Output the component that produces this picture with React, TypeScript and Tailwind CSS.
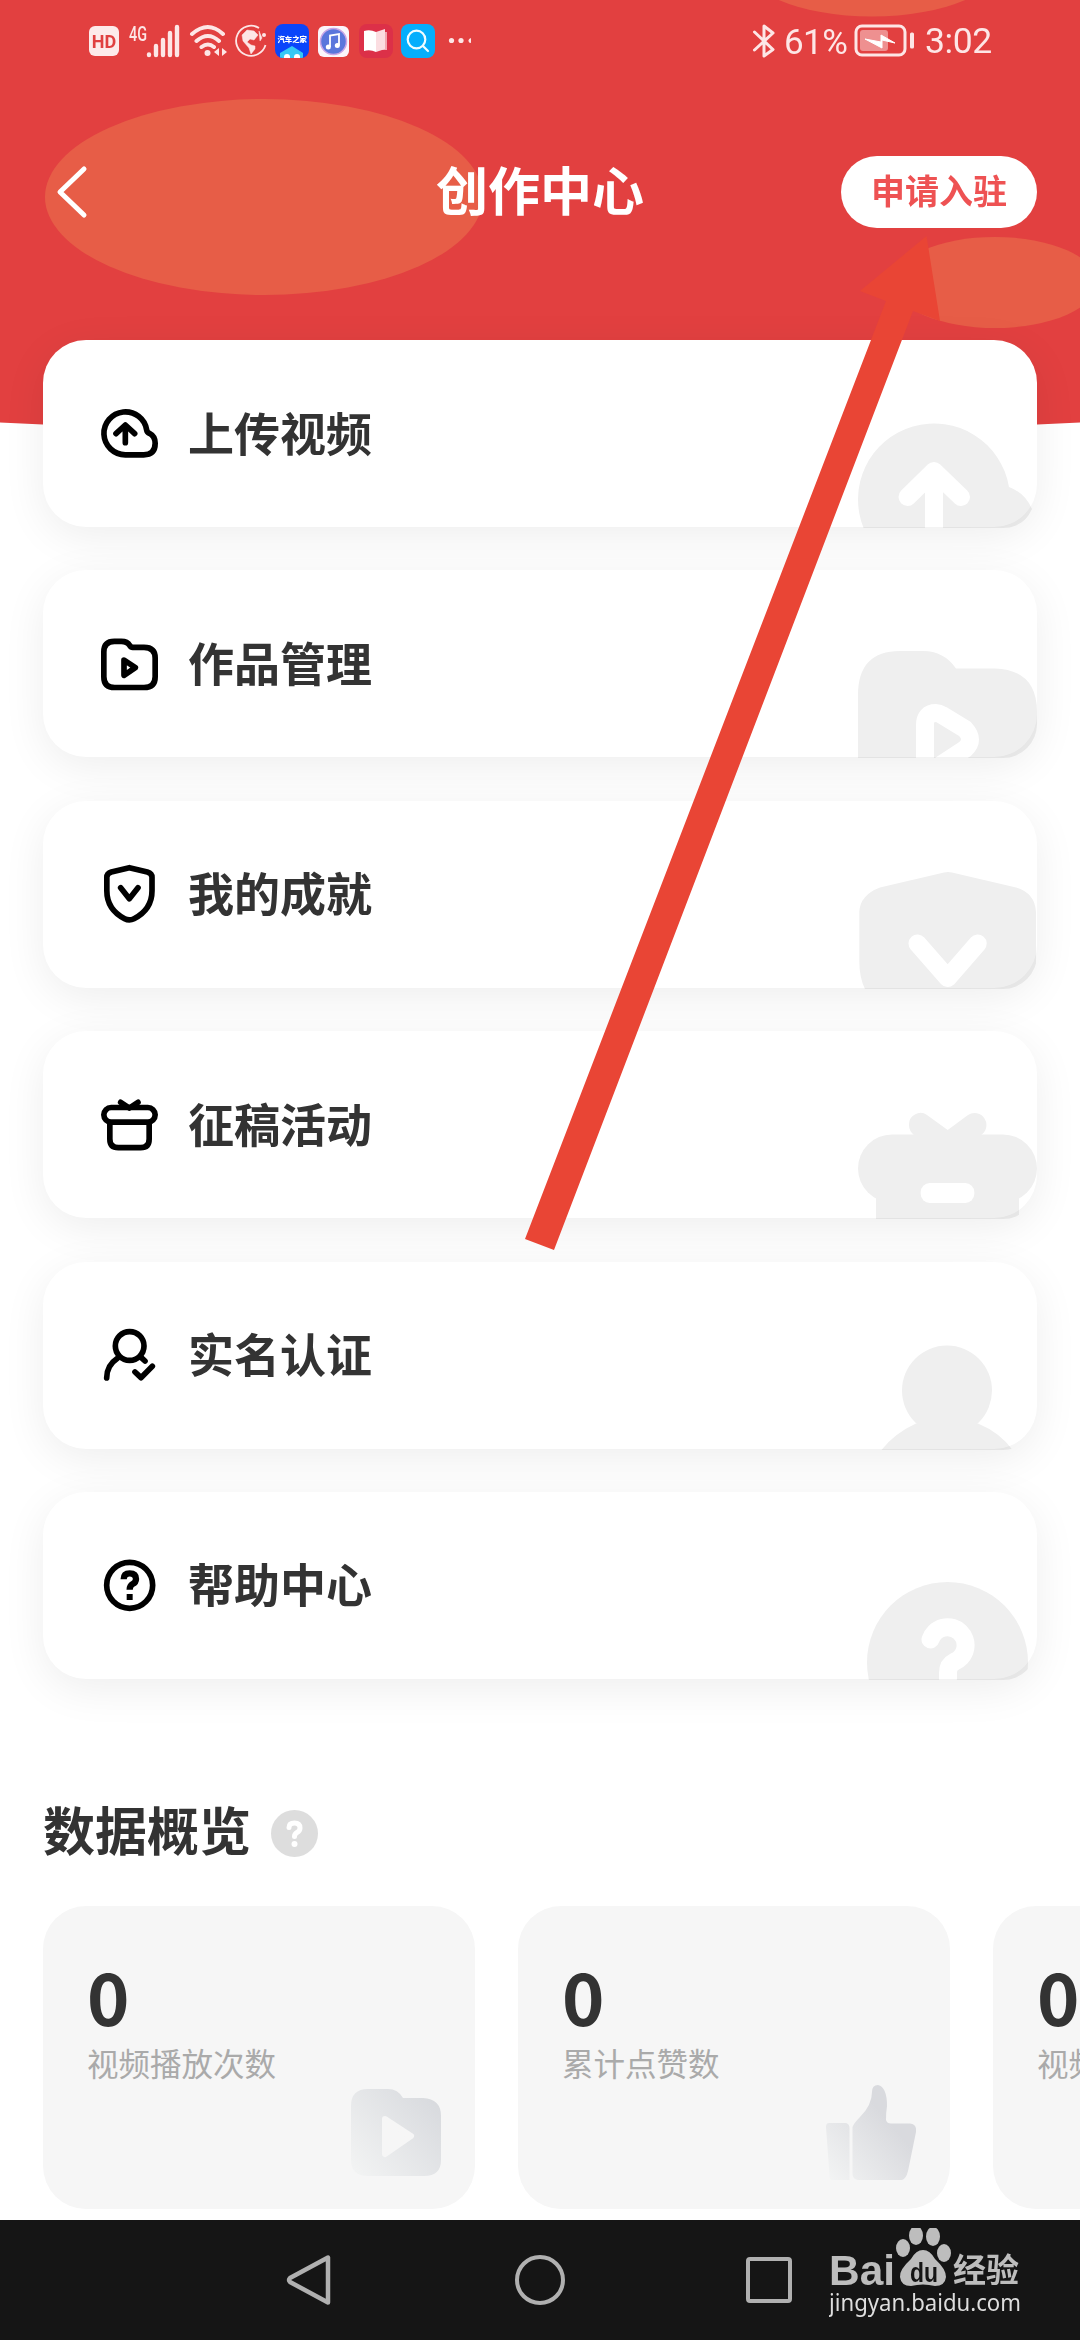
import React from 'react';

type MenuItem = {
  label: string;
  icon: React.ReactNode;
  watermark: React.ReactNode;
};

const menuItems: MenuItem[] = [
  {
    label: '上传视频',
    icon: (
      <>
        <path d="M82 158.5A64.5 64.5 0 1 1 146 84Q147 91 154 94Q171.500 103 171.500 124Q171.500 158.500 137 158.500Z" />
        <path d="M54 95L82 69L110 95M82 72V122" />
      </>
    ),
    watermark: (
      <>
        <path d="M7 189A76 76 0 1 1 152 147Q168 153 175 169Q166 188.500 146 189Z" />
        <path d="M50.500 157L77 131L104 157M77 133V200" stroke="#fff" strokeWidth="18" fill="none" />
      </>
    ),
  },
  {
    label: '作品管理',
    icon: (
      <>
        <path d="M17.500 60Q17.500 28 49 28H70Q88 28 95 40Q99 46 104 46H138Q171.500 46 171.500 78V134Q171.500 166.500 138 166.500H50Q17.500 166.500 17.500 134Z" />
        <path d="M78 84L112 107L78 130Z" />
      </>
    ),
    watermark: (
      <>
        <path d="M1 190V125Q1 81 43 81H66Q87 81 99 98.500H138Q180 100 180 142V190Z" />
        <path d="M68 204V155Q68 143 79 143Q82 143 85 145L108 159Q118 170 108 179L76 200" stroke="#fff" strokeWidth="18" fill="none" />
      </>
    ),
  },
  {
    label: '我的成就',
    icon: (
      <>
        <path d="M94 17L40 30Q26.500 34 26.500 46V86Q26.500 142 80 170Q94 177 108 170Q162 142 162 86V46Q162 34 148 30Z" />
        <path d="M68 77L94 110L120 77" />
      </>
    ),
    watermark: (
      <>
        <path d="M9 190Q2.300 178 2.300 160V111Q3 94 23 86.500L87 71.500Q91 70.500 95 71.500L159 86.500Q178 92 179 111V190Z" />
        <path d="M60.500 142.500L90.700 177L120.700 142.500" stroke="#fff" strokeWidth="18" fill="none" />
      </>
    ),
  },
  {
    label: '征稿活动',
    icon: (
      <>
        <rect x="17.500" y="43.500" width="154" height="44" rx="22" />
        <path d="M35.500 90V138Q35.500 164 61 164H128Q153.500 164 153.500 138V90" />
        <path d="M68 28L94 45L120 28" />
      </>
    ),
    watermark: (
      <>
        <rect x="1" y="103.500" width="179" height="68" rx="34" />
        <path d="M19 150H162V190H19Z" />
        <path d="M52 94A11.500 11.500 0 0 1 70 84L90.700 99L111 84A11.500 11.500 0 0 1 124 104V110H57V104Q52 100 52 94Z" />
        <rect x="63.700" y="152" width="53.600" height="20" rx="9" fill="#fff" />
      </>
    ),
  },
  {
    label: '实名认证',
    icon: (
      <>
        <circle cx="95" cy="69" r="43" />
        <path d="M26 165Q26 127 58 106M130 104L141 114M111 147L129 164L163 130" />
      </>
    ),
    watermark: (
      <>
        <circle cx="90" cy="128.500" r="45" />
        <path d="M23 190Q36 172 59 161.500H121Q144 171 157 190Z" />
      </>
    ),
  },
  {
    label: '帮助中心',
    icon: (
      <>
        <circle cx="95" cy="97" r="69" />
        <path d="M77 79Q77 61 95 61Q114 61 114 78Q114 88 104 93Q95 98 95 110" strokeLinecap="butt" strokeWidth="19" />
        <path d="M86 123H104V141H86Z" fill="#000" stroke="none" />
      </>
    ),
    watermark: (
      <>
        <circle cx="90.500" cy="170.500" r="80.500" />
        <path d="M73.500 147.500A18 18 0 1 1 97 170Q91 173 91 181V186" stroke="#fff" strokeWidth="18" fill="none" />
      </>
    ),
  },
];

const FolderArt = () => (
  <svg className="absolute right-[34px] bottom-[33px] w-[90px] h-[87px]" viewBox="0 0 90 87">
    <defs>
      <linearGradient id="folder" x1="0" y1="1" x2="1" y2="0.200">
        <stop offset="0.050" stopColor="#f2f3f3" />
        <stop offset="1" stopColor="#d8dade" />
      </linearGradient>
    </defs>
    <path d="M0 17Q0 0 17 0H37Q47 0 52 9H72Q90 10 90 27V71Q90 87 73 87H17Q0 87 0 71Z" fill="url(#folder)" />
    <path d="M34 30L60 47L34 65Z" fill="#f6f6f6" stroke="#f6f6f6" strokeWidth="6" strokeLinejoin="round" />
  </svg>
);

const ThumbArt = () => (
  <svg className="absolute right-[34px] bottom-[29px] w-[90px] h-[95px]" viewBox="0 0 90 95">
    <defs>
      <linearGradient id="thumb" gradientUnits="userSpaceOnUse" x1="2" y1="95" x2="66" y2="40">
        <stop offset="0" stopColor="#f3f4f4" />
        <stop offset="1" stopColor="#d9dade" />
      </linearGradient>
    </defs>
    <g fill="url(#thumb)">
      <path d="M3 38H20Q23.500 39 23.500 43V95H5Q3.500 94 3.500 90L0 42Q0 38 3 38Z" />
      <path d="M26.500 42Q28 38 34 32Q46 20 46 7Q46 0 52 0Q61 2 61 21Q60 27 60 35Q61 38.500 65 38.500H84Q91 39 90 47L82 86Q80 94 76 95H32Q26.500 94 26.500 89Z" />
    </g>
  </svg>
);

const stats = [
  { value: '0', label: '视频播放次数', art: <FolderArt /> },
  { value: '0', label: '累计点赞数', art: <ThumbArt /> },
  { value: '0', label: '视频评论数', art: null },
];

const StatusBar = () => (
  <div className="relative flex h-[82px] items-center pl-[89px] pr-[90px] text-[#fde6e6] font-[Roboto,sans-serif]">
    <div className="flex h-[30px] w-[30px] items-center justify-center rounded-[6px] bg-[#fdeaea] text-[18px] font-bold text-[#e04040]">HD</div>
    <svg className="ml-[10px] h-[34px] w-[53px] overflow-visible" viewBox="0 0 53 34">
      <text x="0" y="16.500" fontSize="20" fontWeight="500" fill="#fde6e6" textLength="18" lengthAdjust="spacingAndGlyphs">4G</text>
      <path d="M20 30.500V31M27 22V31M34 16V31M41 9V31M48 3V31" stroke="#fde6e6" strokeWidth="4.400" strokeLinecap="round" />
    </svg>
    <svg className="ml-[7px] h-[34px] w-[39px]" viewBox="0 0 39 34" fill="none" stroke="#fde6e6" strokeWidth="4" strokeLinecap="round">
      <path d="M3 10Q19 -4 34 10M7.500 17Q19 7 30 17M12.500 23Q19 18 25 23" />
      <circle cx="18.500" cy="29" r="3" fill="#fde6e6" stroke="none" />
      <path d="M30 24V32L25 28ZM33 24V32L38 28Z" fill="#fde6e6" stroke="none" />
    </svg>
    <svg className="ml-[6px] h-[34px] w-[34px]" viewBox="0 0 34 34" fill="none" stroke="#fde6e6" strokeWidth="1.800">
      <path d="M25 4A15 15 0 1 0 31.500 21" />
      <path d="M8 11L13 6L20 7L24 11L20 16L16 15L13 18L17 21L21 22V25L17 30L15 24L9 17Z M25 7L28 14L26 17Z" fill="#fde6e6" strokeWidth="0.500" />
      <circle cx="30" cy="11" r="2" fill="#fde6e6" stroke="none" />
    </svg>
    <svg className="ml-[7px] h-[34px] w-[34px] rounded-[8px]" viewBox="0 0 34 34">
      <rect width="34" height="34" fill="#0a45fa" />
      <text x="2.500" y="18" fontSize="7.400" fontWeight="900" fill="#fff" textLength="29.500" className="font-['Noto_Sans_CJK_SC',sans-serif]">汽车之家</text>
      <path d="M17 22L28 29V34H5V29Z" fill="#35c8f5" />
      <circle cx="12" cy="33" r="3" fill="#fff" />
      <circle cx="22" cy="33" r="3" fill="#fff" />
    </svg>
    <svg className="ml-[9px] h-[31px] w-[31px] rounded-[6px]" viewBox="0 0 31 31">
      <rect width="31" height="31" fill="#fbf5fb" />
      <circle cx="15.500" cy="15.500" r="13" fill="#5a76dc" stroke="#c9a6e6" strokeWidth="1.500" />
      <path d="M12 21V9.500L21 8V19.500" fill="none" stroke="#fff" strokeWidth="1.800" />
      <circle cx="10.300" cy="21" r="2.500" fill="#fff" />
      <circle cx="19.300" cy="19.500" r="2.500" fill="#fff" />
    </svg>
    <svg className="ml-[10px] h-[34px] w-[34px] rounded-[8px]" viewBox="0 0 34 34">
      <rect width="34" height="34" fill="#dc3048" />
      <path d="M17 8H28V26H17Z" fill="#f2a7b0" />
      <path d="M5 7Q11 5 17 8V28Q11 25 5 27Z" fill="#fff" />
      <path d="M17 8L26 5V25L17 28Z" fill="#fbdde1" />
    </svg>
    <svg className="ml-[8px] h-[34px] w-[34px] rounded-[8px]" viewBox="0 0 34 34" fill="none" stroke="#effcff" strokeWidth="2.200" strokeLinecap="round">
      <rect width="34" height="34" fill="#05aefc" stroke="none" />
      <circle cx="15.500" cy="15.500" r="8.800" />
      <path d="M22 22L27 27" />
    </svg>
    <svg className="ml-[12px] h-[8px] w-[24px]" viewBox="0 0 24 8" fill="#fde6e6">
      <circle cx="4.500" cy="3.500" r="2.600" />
      <circle cx="14" cy="3.500" r="2.600" />
      <path d="M24 1Q21.500 1.500 21.500 3.500Q21.500 6 24 6Z" />
    </svg>
    <svg className="ml-auto h-[36px] w-[24px]" viewBox="0 0 24 36" fill="none" stroke="#fde6e6" strokeWidth="3" strokeLinejoin="round" strokeLinecap="round">
      <path d="M2.500 9L21 26.500L12 33V3L21 10L2.500 27" />
    </svg>
    <span className="ml-[8px] mt-[2px] w-[67px] text-[35px] leading-none tracking-[-0.6px]">61%</span>
    <svg className="ml-[3px] h-[36px] w-[62px]" viewBox="0 0 62 36">
      <rect x="2" y="3" width="49" height="29" rx="6" fill="none" stroke="#fde6e6" strokeWidth="3" />
      <rect x="6" y="7" width="28" height="21" rx="3" fill="#ee9090" />
      <path d="M11 16L27 19V12L41 20L28 17V25Z" fill="#fff" stroke="#fff" />
      <rect x="56" y="9.500" width="4" height="16" rx="1.500" fill="#fde6e6" />
    </svg>
    <span className="ml-[9px] mt-[2px] w-[65px] text-[35.5px] leading-none tracking-[-0.4px]">3:02</span>
  </div>
);

const HeaderBackground = () => (
  <svg className="absolute left-0 top-0 h-[430px] w-[1080px]" viewBox="0 0 1080 430">
    <path d="M0 0H1080V422.500Q540 450 0 422.500Z" fill="#e24040" />
    <g fill="#e75d47">
      <ellipse cx="264" cy="197" rx="219" ry="98" />
      <ellipse cx="872" cy="-42" rx="134" ry="58.500" />
      <ellipse cx="995" cy="282.500" rx="102" ry="45.500" />
    </g>
  </svg>
);

const MenuCard = ({ label, icon, watermark }: MenuItem) => (
  <div className="relative flex h-[187px] items-center rounded-[43px] bg-white pl-[55px] shadow-[0_10px_44px_rgba(0,0,0,0.07)]">
    <svg className="h-[64px] w-[64px]" viewBox="0 0 192 192" fill="none" stroke="#000" strokeWidth="17" strokeLinecap="round" strokeLinejoin="round">
      {icon}
    </svg>
    <span className="ml-[26px] pb-[6px] text-[46px] font-bold leading-none text-[#333]">{label}</span>
    <svg className="absolute right-0 top-0 h-[188px] w-[180px] rounded-br-[34px] mix-blend-multiply" viewBox="0 0 180 188" fill="#efefef" strokeLinecap="round" strokeLinejoin="round">
      {watermark}
    </svg>
  </div>
);

const NavigationBar = () => (
  <div className="relative flex h-[120px] shrink-0 items-center bg-[#151515] pl-[286px]">
    <svg className="h-[54px] w-[46px]" viewBox="0 0 46 54" fill="none" stroke="#b0b0b0" strokeWidth="4.500" strokeLinejoin="round">
      <path d="M42 4.500V49.500L4 29Q2 27 4 25Z" />
    </svg>
    <div className="ml-[183px] h-[50px] w-[50px] rounded-full border-[4.500px] border-[#b0b0b0]" />
    <div className="ml-[181px] h-[46px] w-[46px] rounded-[4px] border-[4.500px] border-[#b0b0b0]" />
    <svg className="ml-[37px] h-[104px] w-[200px]" viewBox="0 0 200 104" fill="#bdbdbd">
      <text x="0" y="56.500" fontSize="43" fontWeight="700" textLength="66" lengthAdjust="spacingAndGlyphs" className="font-[Liberation_Sans,sans-serif]">Bai</text>
      <ellipse cx="74" cy="20" rx="7" ry="9" />
      <ellipse cx="87" cy="7.500" rx="7" ry="9.500" />
      <ellipse cx="104" cy="8.500" rx="7" ry="9.500" />
      <ellipse cx="115" cy="25" rx="7" ry="9" />
      <path d="M94 22Q101 22 106 31Q117 41 117 49Q116 58 106 58Q94 55 82 58Q72 58 71 49Q70 42 82 31Q87 22 94 22Z" />
      <text x="81" y="54" fontSize="28" fontWeight="700" fill="#151515" textLength="28" lengthAdjust="spacingAndGlyphs" className="font-[Liberation_Sans,sans-serif]">du</text>
      <text x="124" y="54" fontSize="33" fontWeight="700" textLength="66" className="font-['Noto_Sans_CJK_SC',sans-serif]">经验</text>
      <text x="0" y="83" fontSize="24" fill="#dedede" textLength="192" lengthAdjust="spacingAndGlyphs" className="font-[Noto_Sans,sans-serif]">jingyan.baidu.com</text>
    </svg>
  </div>
);

const App: React.FC = () => {
  return (
    <div className="relative flex h-[2340px] w-[1080px] flex-col overflow-hidden bg-white font-['Noto_Sans_CJK_SC',sans-serif]">
      <HeaderBackground />
      <StatusBar />

      {/* Title bar */}
      <div className="relative mt-[74px] grid h-[72px] grid-cols-[1fr_auto_1fr] items-center px-[43px]">
        <svg className="ml-[13px] h-[54px] w-[32px]" viewBox="0 0 32 54" fill="none" stroke="#fff" strokeWidth="5" strokeLinecap="round" strokeLinejoin="round">
          <path d="M28 4L4 27L28 50" />
        </svg>
        <h1 className="pb-[7px] text-[52px] font-bold leading-none text-white">创作中心</h1>
        <button className="flex h-[72px] w-[196px] items-center justify-center justify-self-end rounded-full bg-white pb-[4px] text-[34px] font-bold leading-none text-[#ee5253]">
          申请入驻
        </button>
      </div>

      {/* Menu */}
      <div className="relative mt-[112px] flex flex-col gap-[43.4px] px-[43px]">
        {menuItems.map(item => (
          <MenuCard key={item.label} {...item} />
        ))}
      </div>

      {/* Data overview */}
      <div className="mt-[122px] flex h-[62px] items-center pl-[43px]">
        <h2 className="pb-[6px] text-[52px] font-bold leading-none text-[#333]">数据概览</h2>
        <svg className="ml-[20px] mt-[4px] h-[47px] w-[47px]" viewBox="0 0 47 47">
          <circle cx="23.500" cy="23.500" r="23.500" fill="#ddd" />
          <path d="M18 17.500Q18 13 23.500 13Q29 13 29 18Q29 21 26 22.500Q23.500 24 23.500 26.500" fill="none" stroke="#fff" strokeWidth="5" strokeLinecap="round" />
          <circle cx="23.500" cy="34" r="3" fill="#fff" />
        </svg>
      </div>
      <div className="mt-[43px] flex h-[303px] gap-[43px] pl-[43px]">
        {stats.map(stat => (
          <div key={stat.label} className="relative w-[432px] shrink-0 rounded-[43px] bg-[#f6f6f6] px-[44px] pt-[53px]">
            <div className="text-[72px] font-bold leading-[72px] text-[#333]">{stat.value}</div>
            <div className="mt-[15px] whitespace-nowrap text-[31.5px] leading-[32px] text-[#aaa]">{stat.label}</div>
            {stat.art}
          </div>
        ))}
      </div>

      <div className="grow" />
      <NavigationBar />

      {/* Pointer towards the apply button */}
      <svg className="absolute left-[500px] top-[230px] h-[1040px] w-[460px]" viewBox="500 230 460 1040">
        <path d="M926.500 236L940 321L913 311L554 1250L525 1239L886 301L860 291Z" fill="#e94535" />
      </svg>
    </div>
  );
};

export default App;
